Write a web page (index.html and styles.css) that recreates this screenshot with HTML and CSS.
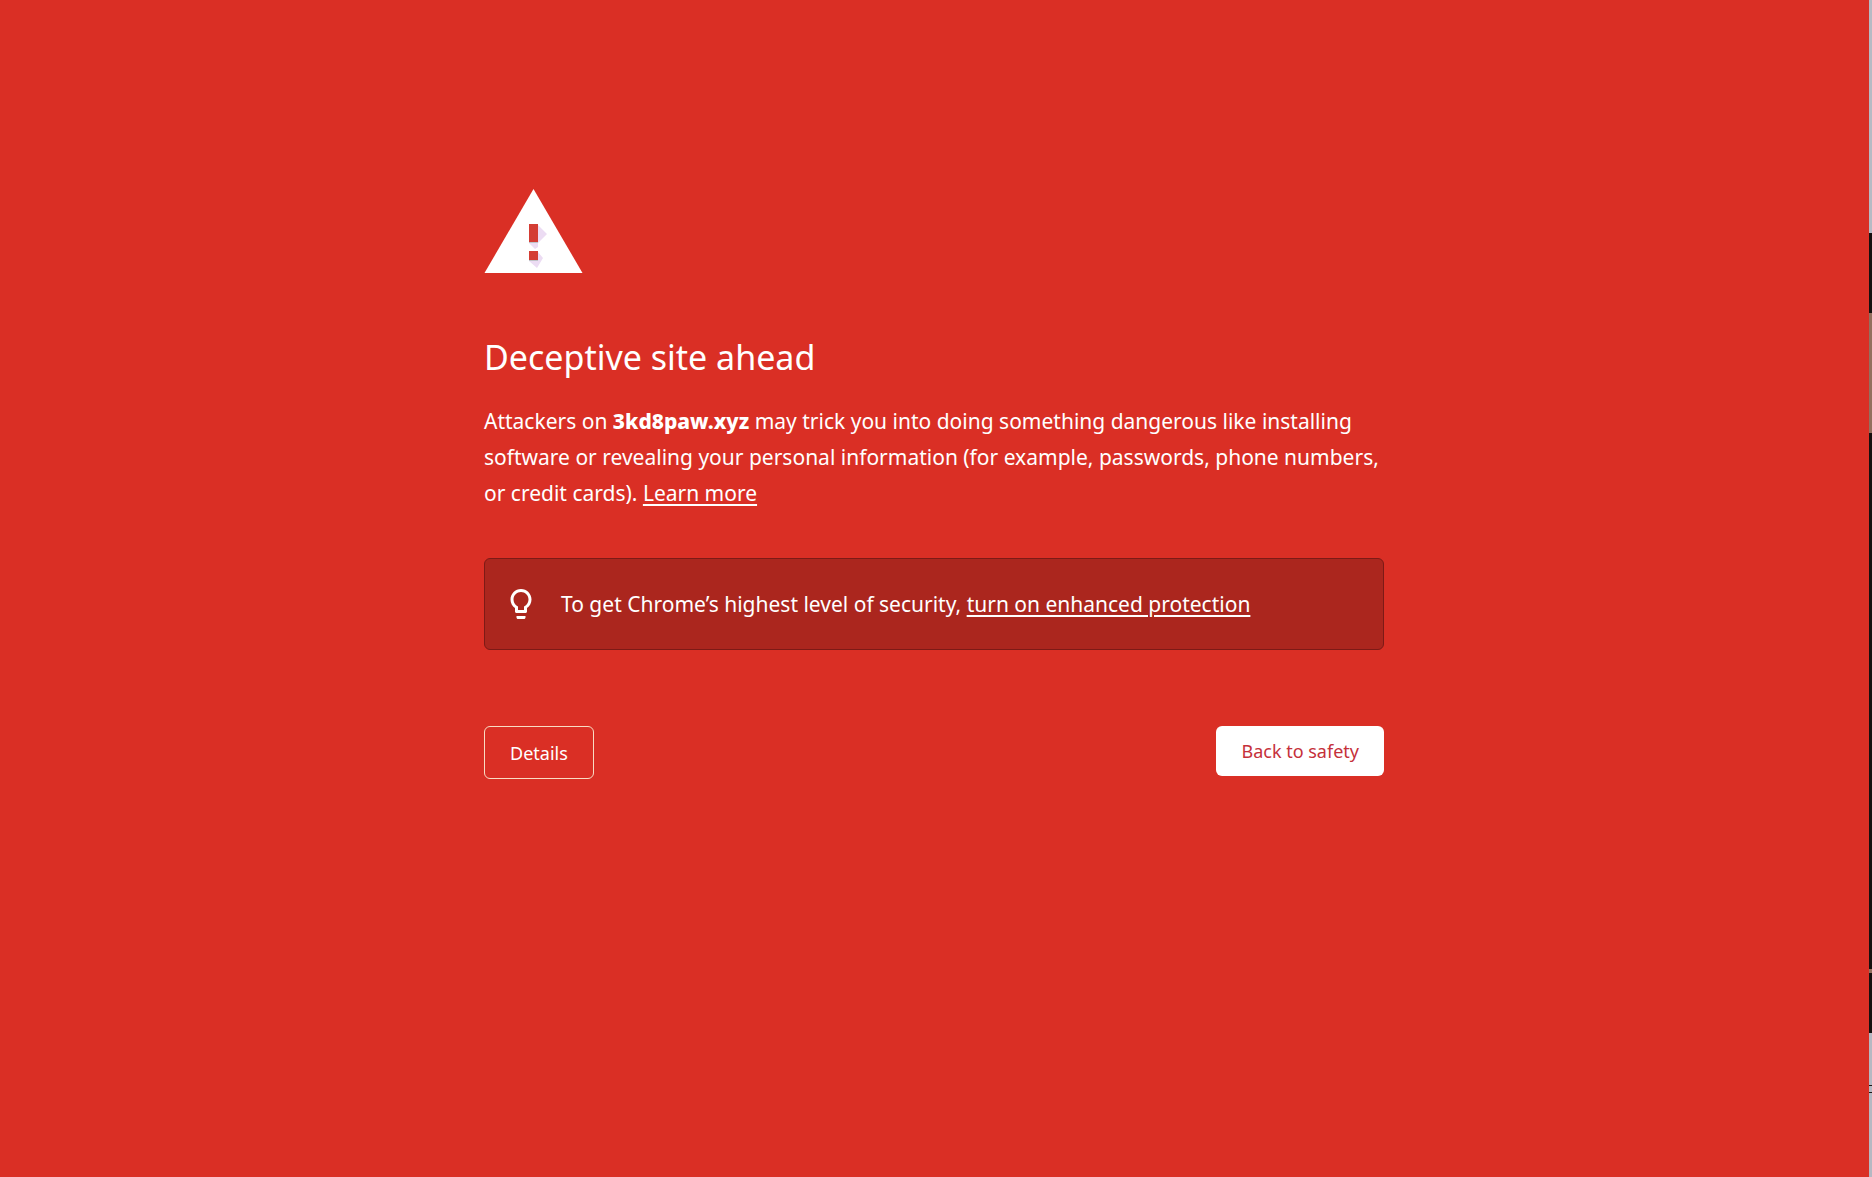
FILE: index.html
```html
<!DOCTYPE html>
<html lang="en">
<head>
  <meta charset="utf-8">
  <meta name="viewport" content="width=device-width, initial-scale=1">
  <title>Security error</title>
  <link rel="stylesheet" href="styles.css">
</head>
<body>
  <div class="page">
    <main class="warning">
      <svg class="warning-icon" viewBox="0 0 100 84" aria-hidden="true">
        <path fill="#fff" d="M49.500 0 98.500 84H.5Z"/>
        <path fill="#ecdcf3" d="M54 36 63 45 54 54V58L51 60 45 54ZM54 63 59 69 53 79 45 72Z"/>
        <path fill="#bfc3c8" d="M45 53h9v1h-9zM45 71h9v1h-9z"/>
        <path fill="#d43d34" d="M45 35h9v18h-9zM45 62h9v9h-9z"/>
      </svg>
      <h1 class="title">Deceptive site ahead</h1>
      <p class="message">Attackers on <strong class="host">3kd8paw.xyz</strong> may trick you into doing something dangerous like installing software or revealing your personal information (for example, passwords, phone numbers, or credit cards). <a class="link" href="#learn-more">Learn more</a></p>
      <div class="tip">
        <svg class="tip-icon" viewBox="0 0 24 24" aria-hidden="true">
          <path fill="#fff" d="M9 21c0 .55.45 1 1 1h4c.55 0 1-.45 1-1v-1H9v1zm3-19C8.14 2 5 5.14 5 9c0 2.38 1.19 4.47 3 5.74V17c0 .55.45 1 1 1h6c.55 0 1-.45 1-1v-2.260c1.810-1.270 3-3.360 3-5.740 0-3.860-3.140-7-7-7zm2.850 11.100-.850.600V16h-4v-2.300l-.850-.600C7.800 12.160 7 10.630 7 9c0-2.760 2.240-5 5-5s5 2.240 5 5c0 1.630-.800 3.160-2.150 4.100z"/>
        </svg>
        <p class="tip-text">To get Chrome’s highest level of security, <a class="link" href="#enhanced-protection">turn on enhanced protection</a></p>
      </div>
      <div class="actions">
        <button class="button button-outline" type="button">Details</button>
        <button class="button button-primary" type="button">Back to safety</button>
      </div>
    </main>
  </div>
  <div class="edge" aria-hidden="true"></div>
</body>
</html>
```
FILE: styles.css
```css
* {
  box-sizing: border-box;
}

body {
  display: flex;
  min-height: 100vh;
  margin: 0;
  background: #da2f25;
  color: #fff;
  font-family: "Noto Sans", "Open Sans", sans-serif;
  font-size: 21px;
  line-height: 36px;
}

.page {
  flex: 1;
  min-width: 0;
  padding: 189px 25px 48px 24px;
}

.warning {
  max-width: 900px;
  margin: 0 auto;
}

.warning-icon {
  display: block;
  width: 100px;
  height: 84px;
}

.title {
  margin: 60px 0 22px;
  font-size: 34px;
  font-weight: 400;
  line-height: 48px;
}

.message,
.tip-text {
  margin: 0;
}

.host {
  font-weight: 800;
}

.link {
  color: inherit;
  text-decoration-thickness: 2px;
  text-underline-offset: 3px;
}

.tip {
  display: flex;
  align-items: center;
  gap: 22px;
  margin: 47px 0 76px;
  padding: 27px 18px;
  border: 1px solid #7d1a16;
  border-radius: 6px;
  background: #ab261e;
}

.tip-icon {
  flex: none;
  width: 36px;
  height: 36px;
}

.actions {
  display: flex;
  align-items: flex-start;
  justify-content: space-between;
}

.button {
  padding: 12px 25px;
  border: 0;
  border-radius: 6px;
  font: inherit;
  font-size: 18px;
  line-height: 26px;
  cursor: pointer;
}

.button-outline {
  padding-top: 13px;
  border: 1px solid #f9dcc4;
  background: transparent;
  color: #fff;
}

.button-primary {
  background: #fff;
  color: #c5303a;
}

/* Sliver of the window behind the page */
.edge {
  flex: none;
  width: 3px;
  background: linear-gradient(
    #b5bac4 233px, #15100f 233px 313px,
    #93705f 313px 433px, #15100f 433px 969px,
    #93705f 969px 973px, #15100f 973px 1033px,
    #b5b8c2 1033px 1085px, #1c1815 1085px 1086px,
    #b5b8c2 1086px 1092px, #1c1815 1092px 1093px,
    #b5b8c2 1093px
  );
}
```
